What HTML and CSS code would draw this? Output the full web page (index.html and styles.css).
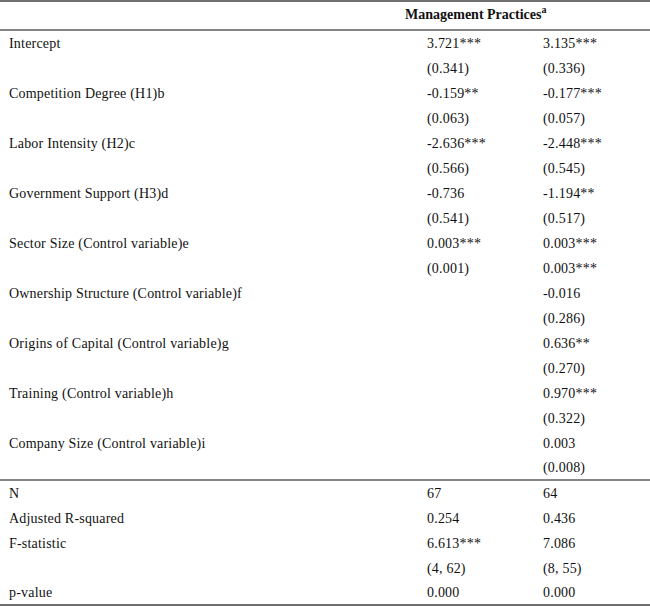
FILE: index.html
```html
<!DOCTYPE html>
<html>
<head>
<meta charset="utf-8">
<link rel="stylesheet" href="styles.css">
</head>
<body>
<table class="results">
  <colgroup>
    <col class="c-label">
    <col class="c-gap">
    <col class="c-m1">
    <col class="c-m2">
  </colgroup>
  <thead>
    <tr>
      <th class="blank"></th>
      <th class="title" colspan="3">Management Practices<sup>a</sup></th>
    </tr>
  </thead>
  <tbody>
    <tr><td colspan="2">Intercept</td><td>3.721***</td><td class="v2">3.135***</td></tr>
    <tr><td colspan="2"></td><td>(0.341)</td><td class="v2">(0.336)</td></tr>
    <tr><td colspan="2">Competition Degree (H1)b</td><td>-0.159**</td><td class="v2">-0.177***</td></tr>
    <tr><td colspan="2"></td><td>(0.063)</td><td class="v2">(0.057)</td></tr>
    <tr><td colspan="2">Labor Intensity (H2)c</td><td>-2.636***</td><td class="v2">-2.448***</td></tr>
    <tr><td colspan="2"></td><td>(0.566)</td><td class="v2">(0.545)</td></tr>
    <tr><td colspan="2">Government Support (H3)d</td><td>-0.736</td><td class="v2">-1.194**</td></tr>
    <tr><td colspan="2"></td><td>(0.541)</td><td class="v2">(0.517)</td></tr>
    <tr><td colspan="2">Sector Size (Control variable)e</td><td>0.003***</td><td class="v2">0.003***</td></tr>
    <tr><td colspan="2"></td><td>(0.001)</td><td class="v2">0.003***</td></tr>
    <tr><td colspan="2">Ownership Structure (Control variable)f</td><td></td><td class="v2">-0.016</td></tr>
    <tr><td colspan="2"></td><td></td><td class="v2">(0.286)</td></tr>
    <tr><td colspan="2">Origins of Capital (Control variable)g</td><td></td><td class="v2">0.636**</td></tr>
    <tr><td colspan="2"></td><td></td><td class="v2">(0.270)</td></tr>
    <tr><td colspan="2">Training (Control variable)h</td><td></td><td class="v2">0.970***</td></tr>
    <tr><td colspan="2"></td><td></td><td class="v2">(0.322)</td></tr>
    <tr><td colspan="2">Company Size (Control variable)i</td><td></td><td class="v2">0.003</td></tr>
    <tr class="group-end"><td colspan="2"></td><td></td><td class="v2">(0.008)</td></tr>
  </tbody>
  <tbody class="stats">
    <tr><td colspan="2">N</td><td>67</td><td class="v2">64</td></tr>
    <tr><td colspan="2">Adjusted R-squared</td><td>0.254</td><td class="v2">0.436</td></tr>
    <tr><td colspan="2">F-statistic</td><td>6.613***</td><td class="v2">7.086</td></tr>
    <tr><td colspan="2"></td><td>(4, 62)</td><td class="v2">(8, 55)</td></tr>
    <tr class="table-end"><td colspan="2">p-value</td><td>0.000</td><td class="v2">0.000</td></tr>
  </tbody>
</table>
</body>
</html>
```

FILE: styles.css
```css
html, body {
  margin: 0;
  padding: 0;
  background: #ffffff;
}

body {
  font-family: "Liberation Serif", "Times New Roman", serif;
  font-size: 14px;
  color: #111111;
}

.results {
  width: 650px;
  table-layout: fixed;
  border-collapse: separate;
  border-spacing: 0;
}

.c-label { width: 246px; }
.c-gap { width: 172px; }
.c-m1 { width: 117px; }
.c-m2 { width: 115px; }

.results th,
.results td {
  box-sizing: border-box;
  padding: 0 0 0 9px;
  text-align: left;
  vertical-align: middle;
  white-space: nowrap;
  font-weight: normal;
}

.results thead th {
  height: 31px;
  border-top: 2px solid #707070;
  border-bottom: 2px solid #858585;
}

.results .title {
  font-weight: bold;
  padding-left: 159px;
  padding-bottom: 1px;
}

.title sup {
  font-size: 10px;
  vertical-align: 6px;
  line-height: 0;
}

.results tbody td {
  height: 25px;
  line-height: 16px;
  padding-top: 1px;
  letter-spacing: 0.2px;
}

.results td.v2 {
  padding-left: 8px;
}

.results tr.group-end td {
  border-bottom: 2px solid #858585;
}

.results tr.table-end td {
  border-bottom: 2px solid #707070;
}
```
